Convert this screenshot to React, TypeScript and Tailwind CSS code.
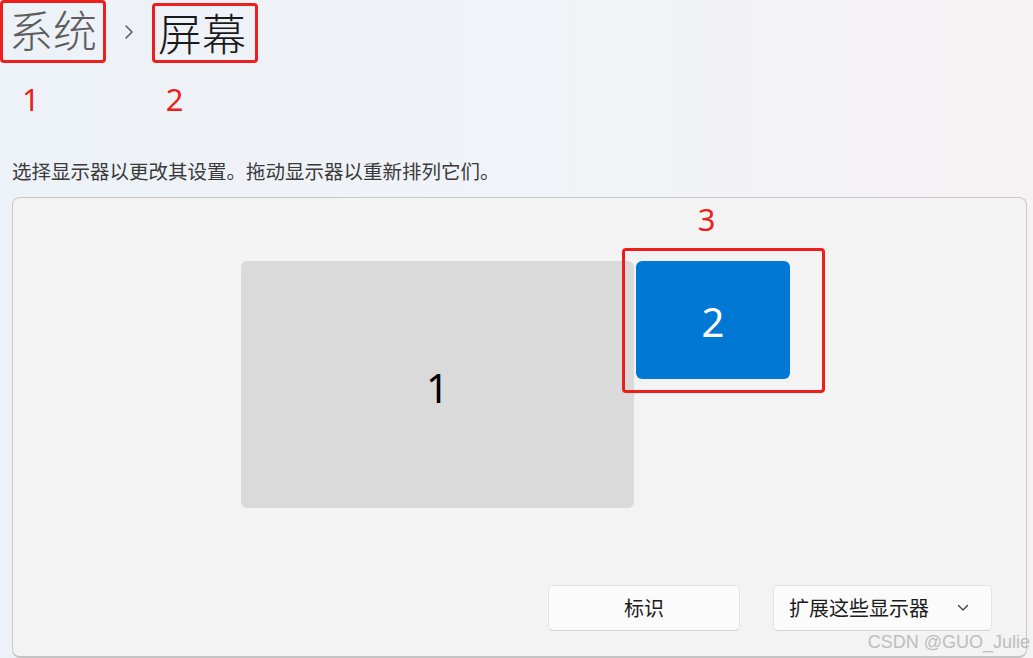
import React from 'react';

const cjk = { fontFamily: '"Noto Sans CJK SC", "Noto Sans", sans-serif' };
const latin = { fontFamily: '"Noto Sans", "Noto Sans CJK SC", sans-serif' };

// rouge des annotations
const RED = 'border-[3px] border-[#ec1f1c] rounded-[4px]';

export default function App() {
  return (
    <div className="relative w-[1033px] h-[658px] overflow-hidden bg-gradient-to-r from-[#edf2f8] via-[#f0f3f7] to-[#f6f2f4]" style={cjk}>
      {/* Fil d'Ariane */}
      <div className="flex items-start">
        <div className={`w-[106px] h-[63px] flex items-center justify-center pb-[4px] ${RED}`}>
          <span className="text-[44px] leading-[1.1] text-[#5d5d5d] font-light">系统</span>
        </div>
        <svg className="mx-[16px] mt-[23px]" width="14" height="18" viewBox="0 0 14 18" fill="none">
          <path d="M4 3 L10 9 L4 15" stroke="#5d5d5d" strokeWidth="1.6" strokeLinecap="round" strokeLinejoin="round" />
        </svg>
        <div className={`mt-[3px] w-[106px] h-[60px] flex items-center pl-[3px] pb-[2px] ${RED}`}>
          <span className="text-[44px] leading-[1.1] text-[#1a1a1a] font-light">屏幕</span>
        </div>
      </div>
      <div className="flex items-start h-[98px] pt-[21px] text-[31px] leading-none text-[#ec1f1c]" style={latin}>
        <span className="ml-[22px]">1</span>
        <span className="ml-[126px]">2</span>
      </div>

      <p className="pl-[12px] text-[19.5px] leading-none text-[#3a3a3a]">
        选择显示器以更改其设置。拖动显示器以重新排列它们。
      </p>

      {/* Panneau d'agencement des écrans */}
      <div className="ml-[12px] mt-[16px] w-[1015px] h-[461px] bg-[#f3f3f3] border border-[#c9c9c9] border-b-[2px] border-b-[#c4c4c4] rounded-[8px] flex flex-col">
        <div className="relative flex-1">
          <div className="absolute left-[228px] top-[63px] w-[393px] h-[247px] rounded-[6px] bg-[#dadada] flex items-center justify-center pt-[8px]">
            <span className="text-[40px] leading-none text-black" style={latin}>1</span>
          </div>
          <div className="absolute left-[609px] top-[6px] w-[203px] flex flex-col items-center">
            <span className="text-[31px] leading-none text-[#ec1f1c] h-[44px] mr-[34px]" style={latin}>3</span>
            <div className={`w-[203px] h-[145px] flex items-center justify-center pr-[21px] ${RED}`}>
              <div className="w-[154px] h-[118px] rounded-[6px] bg-[#0078d4] flex items-center justify-center pt-[4px]">
                <span className="text-[40px] leading-none text-white" style={latin}>2</span>
              </div>
            </div>
          </div>
        </div>
        <div className="flex justify-end gap-[33px] pr-[34px] pb-[25px]">
          <button className="w-[192px] h-[46px] rounded-[5px] bg-[#fbfbfb] border border-[#e3e3e3] border-b-[#d0d0d0] text-[20px] text-[#1b1b1b]">
            标识
          </button>
          <button className="w-[219px] h-[46px] rounded-[5px] bg-[#fbfbfb] border border-[#e3e3e3] border-b-[#d0d0d0] text-[20px] text-[#1b1b1b] flex items-center pl-[15px] pr-[22px]">
            <span className="flex-1 text-left">扩展这些显示器</span>
            <svg width="12" height="8" viewBox="0 0 12 8" fill="none">
              <path d="M1.5 1.5 L6 6 L10.5 1.5" stroke="#3a3a3a" strokeWidth="1.2" strokeLinecap="round" strokeLinejoin="round" />
            </svg>
          </button>
        </div>
      </div>

      {/* Filigrane */}
      <span className="absolute right-[3px] bottom-[7px] text-[18px] leading-none text-[#bdbdbd]" style={{ fontFamily: '"Liberation Sans", Arial, sans-serif' }}>
        CSDN @GUO_Julie
      </span>
    </div>
  );
}
